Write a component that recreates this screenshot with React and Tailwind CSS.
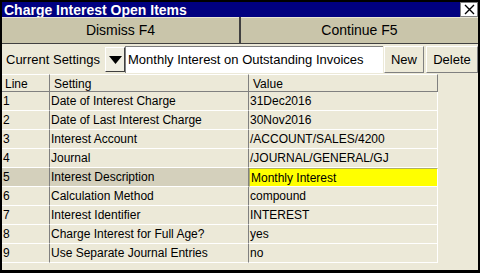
import { useState } from "react";

const rows = [
  { n: 1, setting: "Date of Interest Charge", value: "31Dec2016" },
  { n: 2, setting: "Date of Last Interest Charge", value: "30Nov2016" },
  { n: 3, setting: "Interest Account", value: "/ACCOUNT/SALES/4200" },
  { n: 4, setting: "Journal", value: "/JOURNAL/GENERAL/GJ" },
  { n: 5, setting: "Interest Description", value: "Monthly Interest" },
  { n: 6, setting: "Calculation Method", value: "compound" },
  { n: 7, setting: "Interest Identifier", value: "INTEREST" },
  { n: 8, setting: "Charge Interest for Full Age?", value: "yes" },
  { n: 9, setting: "Use Separate Journal Entries", value: "no" },
];

export default function App() {
  const [selected, setSelected] = useState(5);

  return (
    <div className="w-[480px] h-[273px] bg-black p-[2px] pb-[3px] font-['Liberation_Sans',Arial,sans-serif] text-black">
      <div className="w-full h-full flex flex-col bg-[#ece9d8]">
        {/* TITLE */}
        <div className="h-[15px] bg-[#000080] flex items-center justify-between pl-[2px]">
          <span className="text-[14px] font-bold text-white leading-none">Charge Interest Open Items</span>
          <button className="w-[18px] h-[15px] bg-white border border-[#808080] flex items-center justify-center">
            <svg width="11" height="11" viewBox="0 0 11 11">
              <path d="M1 1 L10 10 M10 1 L1 10" stroke="#000" strokeWidth="1.4" />
            </svg>
          </button>
        </div>

        {/* ACTIONS */}
        <div className="h-[27px] flex bg-[#404040] gap-[2px] border-b border-[#404040]">
          <button className="flex-1 bg-[#c9c5aa] border-t border-[#e8e5d4] text-[14px]">Dismiss F4</button>
          <button className="flex-1 bg-[#c9c5aa] border-t border-[#e8e5d4] text-[14px]">Continue F5</button>
        </div>

        {/* SETTINGS PICKER */}
        <div className="h-[30px] flex items-center pt-[1px]">
          <span className="w-[103px] pl-[4px] text-[13px]">Current Settings</span>
          <button className="w-[20px] h-[25px] bg-[#f0eee2] border border-t-white border-l-white border-r-[#404040] border-b-[#404040] flex items-center justify-center">
            <svg width="13" height="8" viewBox="0 0 13 8"><path d="M0 0 H13 L6.5 8 Z" fill="#000" /></svg>
          </button>
          <div className="w-[258px] h-[27px] bg-white border-t border-l border-[#808080] flex items-center pl-[2px] text-[13px]">
            Monthly Interest on Outstanding Invoices
          </div>
          <button className="w-[40px] h-[27px] ml-[1px] bg-[#ece9d8] border border-t-white border-l-white border-r-[#808080] border-b-[#808080] text-[13px]">New</button>
          <button className="w-[52px] h-[27px] ml-[2px] bg-[#ece9d8] border border-t-white border-l-white border-r-[#808080] border-b-[#808080] text-[13px]">Delete</button>
        </div>

        {/* TABLE */}
        <div className="flex-1">
          <div className="flex h-[18px] text-[12px]">
            <div className="w-[48px] pl-[3px] border-r border-b border-[#808080] border-t border-t-white">Line</div>
            <div className="w-[199px] pl-[4px] border-r border-b border-[#808080] border-t border-t-white">Setting</div>
            <div className="w-[189px] pl-[4px] border-r border-b border-[#808080] border-t border-t-white">Value</div>
          </div>
          {rows.map((r) => {
            const sel = r.n === selected;
            return (
              <div key={r.n} className="flex h-[19px] text-[12px] cursor-default" onClick={() => setSelected(r.n)}>
                <div className={`w-[48px] pl-[1px] flex items-center border-r border-[#808080] border-b border-b-white ${sel ? "bg-[#d4d0bc]" : ""}`}>{r.n}</div>
                <div className={`w-[199px] pl-[1px] flex items-center border-r border-[#808080] border-b border-b-white ${sel ? "bg-[#d4d0bc]" : ""}`}>{r.setting}</div>
                <div className={`w-[189px] pl-[1px] flex items-center border-r border-r-white border-b border-b-white ${sel ? "bg-[#ffff00] border border-[#b0b060]" : ""}`}>{r.value}</div>
              </div>
            );
          })}
        </div>
      </div>
    </div>
  );
}
